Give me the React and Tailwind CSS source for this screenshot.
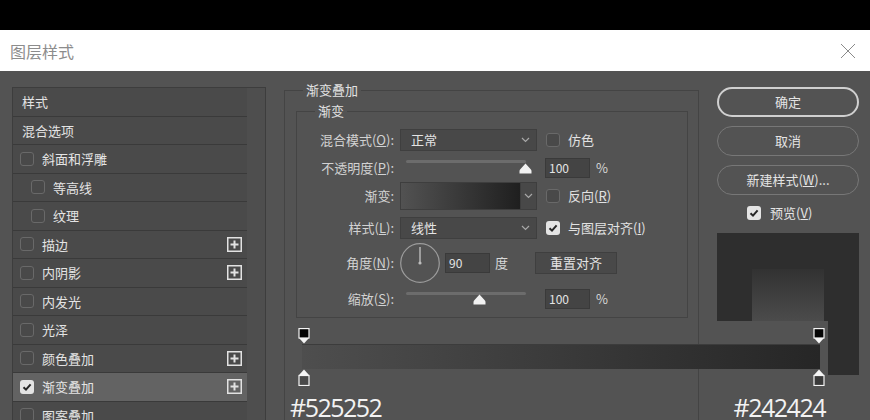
import React from "react";

const layers = [
  { t: "样式", plain: true },
  { t: "混合选项", plain: true },
  { t: "斜面和浮雕" },
  { t: "等高线", sub: true },
  { t: "纹理", sub: true },
  { t: "描边", plus: true },
  { t: "内阴影", plus: true },
  { t: "内发光" },
  { t: "光泽" },
  { t: "颜色叠加", plus: true },
  { t: "渐变叠加", plus: true, checked: true },
  { t: "图案叠加" },
];

const Check = ({ checked }) =>
  checked ? (
    <span className="flex h-[14px] w-[14px] shrink-0 items-center justify-center rounded-[3px] bg-[#e4e4e4]">
      <svg width="10" height="10" viewBox="0 0 10 10">
        <path d="M1.5 5.2 L4 7.6 L8.6 2.4" stroke="#262626" strokeWidth="2" fill="none" />
      </svg>
    </span>
  ) : (
    <span className="h-[14px] w-[14px] shrink-0 rounded-[3px] border border-[#696969] bg-[#494949]" />
  );

const Plus = () => (
  <svg width="15" height="15" viewBox="0 0 15 15">
    <rect x="0.75" y="0.75" width="13.5" height="13.5" stroke="#e2e2e2" strokeWidth="1.5" fill="none" />
    <path d="M7.5 3.5 V11.5 M3.5 7.5 H11.5" stroke="#e2e2e2" strokeWidth="2" />
  </svg>
);

const Chevron = () => (
  <svg width="9" height="6" viewBox="0 0 9 6">
    <path d="M1 1 L4.5 4.5 L8 1" stroke="#a8a8a8" strokeWidth="1.2" fill="none" />
  </svg>
);

const Thumb = ({ className }) => (
  <svg className={className} width="13" height="11" viewBox="0 0 13 11">
    <path d="M6.5 0.5 L11.5 6 Q12.5 7 12.5 8 V10.5 H0.5 V8 Q0.5 7 1.5 6 Z" fill="#f2f2f2" />
  </svg>
);

const Label = ({ children }) => (
  <div className="w-[97px] shrink-0 text-right text-[#d2d2d2]">{children}</div>
);

const Select = ({ value }) => (
  <div className="ml-[6px] flex h-[22px] w-[137px] items-center justify-between border border-[#3f3f3f] bg-[#484848] pl-[10px] pr-[6px] text-[#e4e4e4]">
    <span>{value}</span>
    <Chevron />
  </div>
);

const NumBox = ({ value, className }) => (
  <div className={`flex h-[20px] w-[45px] items-center border border-[#3a3a3a] bg-[#444444] pl-[3px] text-[12px] text-[#e4e4e4] ${className}`}>
    {value}
  </div>
);

const Stop = ({ up, fill }) =>
  up ? (
    <svg width="12" height="17" viewBox="0 0 12 17">
      <path d="M6 0.5 L11 6 H1 Z" fill="#f4f4f4" />
      <rect x="1" y="6.5" width="10" height="10" fill={fill} stroke="#f4f4f4" strokeWidth="1.2" />
    </svg>
  ) : (
    <svg width="12" height="16" viewBox="0 0 12 16">
      <rect x="1" y="0.6" width="10" height="9.4" fill="#050505" stroke="#f4f4f4" strokeWidth="1.2" />
      <path d="M1 10 H11 L6 15.5 Z" fill="#f4f4f4" />
    </svg>
  );

export default function App() {
  return (
    <div className="relative h-[420px] w-[870px] overflow-hidden bg-black font-['Noto_Sans_CJK_SC',sans-serif] text-[13px]">
      <div className="h-[30px] bg-black" />

      {/* title bar */}
      <div className="flex h-[41px] items-center justify-between bg-white pl-[10px] pr-[14px]">
        <span className="text-[16px] text-[#8c8c8c]">图层样式</span>
        <svg width="16" height="16" viewBox="0 0 16 16">
          <path d="M1 1 L15 15 M15 1 L1 15" stroke="#8a8a8a" strokeWidth="1" />
        </svg>
      </div>

      <div className="flex h-[349px] bg-[#535353]">
        {/* left list */}
        <div className="ml-[12px] mt-[16px] flex w-[254px] self-start border border-[#3d3d3d] bg-[#4e4e4e]">
          <div className="flex w-[234px] flex-col">
            {layers.map((l) => (
              <div
                key={l.t}
                className={`flex h-[28.5px] shrink-0 items-center border-b border-[#3a3a3a] text-[#e4e4e4] ${
                  l.checked ? "bg-[#636363]" : "bg-[#4a4a4a]"
                } ${l.plain ? "pl-[9px]" : l.sub ? "pl-[18px]" : "pl-[7px]"}`}
              >
                {!l.plain && <Check checked={l.checked} />}
                <span className={l.plain ? "" : "ml-[8px]"}>{l.t}</span>
                {l.plus && (
                  <span className="ml-auto mr-[5px] flex">
                    <Plus />
                  </span>
                )}
              </div>
            ))}
          </div>
        </div>

        {/* middle */}
        <fieldset className="ml-[18px] mt-[11px] w-[415px] self-start border border-[#444444] pb-[200px]">
          <legend className="ml-[18px] px-[3px] leading-[16px] text-[#e2e2e2]">渐变叠加</legend>
          <fieldset className="ml-[11px] mr-[10px] mt-[5px] border border-[#444444] pb-[8px]">
            <legend className="ml-[18px] px-[3px] leading-[16px] text-[#e2e2e2]">渐变</legend>

            <div className="mt-[10px] flex h-[22px] items-center">
              <Label>
                混合模式(<span className="underline">O</span>):
              </Label>
              <Select value="正常" />
              <span className="ml-[9px] flex">
                <Check />
              </span>
              <span className="ml-[8px] text-[#e2e2e2]">仿色</span>
            </div>

            <div className="mt-[6px] flex h-[21px] items-center">
              <Label>
                不透明度(<span className="underline">P</span>):
              </Label>
              <div className="ml-[6px] flex h-full w-[137px] flex-col pt-[3px]">
                <div className="ml-[6px] h-[3px] w-[120px] rounded-full bg-[#6c6c6c]" />
                <Thumb className="ml-[119px]" />
              </div>
              <NumBox value="100" className="ml-[8px]" />
              <span className="ml-[6px] text-[#d8d8d8]">%</span>
            </div>

            <div className="mt-[4px] flex h-[28px] items-center">
              <Label>渐变:</Label>
              <div className="ml-[6px] flex h-[28px] w-[137px] border border-[#3e3e3e]">
                <div className="flex-1 bg-[linear-gradient(to_right,#525252,#1f1f1f)]" />
                <div className="flex w-[16px] items-center justify-center border-l border-[#3e3e3e] bg-[#484848]">
                  <Chevron />
                </div>
              </div>
              <span className="ml-[9px] flex">
                <Check />
              </span>
              <span className="ml-[8px] text-[#e2e2e2]">
                反向(<span className="underline">R</span>)
              </span>
            </div>

            <div className="mt-[7px] flex h-[22px] items-center">
              <Label>
                样式(<span className="underline">L</span>):
              </Label>
              <Select value="线性" />
              <span className="ml-[9px] flex">
                <Check checked />
              </span>
              <span className="ml-[8px] text-[#e2e2e2]">
                与图层对齐(<span className="underline">I</span>)
              </span>
            </div>

            <div className="mt-[4px] flex h-[40px] items-center">
              <Label>
                角度(<span className="underline">N</span>):
              </Label>
              <svg className="ml-[6px]" width="40" height="40" viewBox="0 0 40 40">
                <circle cx="20" cy="20" r="19.3" stroke="#9c9c9c" strokeWidth="1.2" fill="none" />
                <path d="M20 20 V4" stroke="#bdbdbd" strokeWidth="1.4" />
                <circle cx="20" cy="20" r="1.6" fill="#bdbdbd" />
              </svg>
              <NumBox value="90" className="ml-[5px]" />
              <span className="ml-[5px] text-[#d8d8d8]">度</span>
              <div className="ml-[27px] flex h-[22px] w-[82px] items-center justify-center border border-[#3f3f3f] bg-[#494949] text-[#e4e4e4]">
                重置对齐
              </div>
            </div>

            <div className="mt-[5px] flex h-[21px] items-center">
              <Label>
                缩放(<span className="underline">S</span>):
              </Label>
              <div className="ml-[6px] flex h-full w-[137px] flex-col pt-[4px]">
                <div className="ml-[6px] h-[3px] w-[120px] rounded-full bg-[#6c6c6c]" />
                <Thumb className="ml-[73px] -mt-[1px]" />
              </div>
              <NumBox value="100" className="ml-[8px]" />
              <span className="ml-[6px] text-[#d8d8d8]">%</span>
            </div>
          </fieldset>
        </fieldset>

        {/* right column */}
        <div className="ml-[18px] flex w-[142px] flex-col pt-[16px] text-[#e4e4e4]">
          <div className="flex h-[30px] items-center justify-center rounded-full border-2 border-[#d0d0d0]">确定</div>
          <div className="mt-[9px] flex h-[30px] items-center justify-center rounded-full border-[1.5px] border-[#777777]">
            取消
          </div>
          <div className="mt-[9px] flex h-[30px] items-center justify-center rounded-full border-[1.5px] border-[#777777]">
            新建样式(<span className="underline">W</span>)...
          </div>
          <div className="mt-[8px] flex h-[19px] items-center pl-[30px]">
            <Check checked />
            <span className="ml-[9px]">
              预览(<span className="underline">V</span>)
            </span>
          </div>
          <div className="mt-[11px] flex h-[142px] justify-center bg-[#2e2e2e] pt-[36px]">
            <div className="h-[72px] w-[72px] bg-[linear-gradient(to_bottom,#323232,#555555)]" />
          </div>
        </div>
      </div>

      {/* gradient editor strip laid over the dialog */}
      <div className="absolute left-[289px] top-[321px] flex h-[99px] w-[539px] flex-col bg-[linear-gradient(to_right,transparent_411px,#535353_411px)]">
        <div className="ml-[9px] mt-[7px] flex w-[527px] justify-between">
          <Stop />
          <Stop />
        </div>
        <div className="ml-[13px] h-[26px] w-[518px] border-t border-[#3c3c3c] bg-[linear-gradient(to_right,#4e4e4e,#262626)]" />
        <div className="ml-[9px] flex w-[527px] justify-between">
          <Stop up fill="#4a4a4a" />
          <Stop up fill="#3a3a3a" />
        </div>
        <div className="ml-[1px] mt-[9px] flex w-[535px] justify-between font-['Open_Sans',sans-serif] text-[25px] leading-none tracking-[-1.5px] text-[#f2f2f2]">
          <span>#525252</span>
          <span>#242424</span>
        </div>
      </div>
    </div>
  );
}
